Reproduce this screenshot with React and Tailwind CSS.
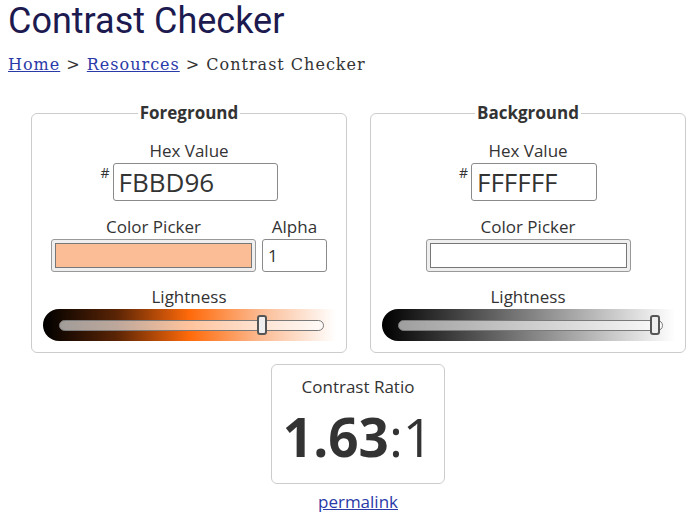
import React from 'react';

const sans = "font-['Open_Sans',sans-serif]";

function Slider({ gradient, thumb }) {
    return (
        <div className={`relative mx-auto h-8 w-[293px] rounded-l-full ${gradient} flex items-center pl-4 pr-3`}>
            <div className="h-[11px] w-full rounded-full border border-[#7a7a7a] bg-white/60" />
            <div
                className="absolute top-[6px] h-[20px] w-[10px] rounded-[3px] border-2 border-[#555] bg-[#eee]"
                style={{ left: thumb }}
            />
        </div>
    );
}

function Panel({ title, hex, swatch, alpha, gradient, thumb }) {
    return (
        <fieldset className="w-[316px] rounded-md border border-[#ccc] px-2 pb-[11px] pt-[14px] text-center">
            <legend className="mx-auto px-[2px] text-[17px] font-bold leading-6 text-[#333]">{title}</legend>
            <div className="text-[17px] leading-6 text-[#333]">Hex Value</div>
            <div className="flex justify-center">
                <span className="mr-[3px] mt-[2px] text-[14px] leading-4 text-[#333]">#</span>
                <input
                    readOnly
                    value={hex}
                    className={`h-[38px] ${alpha ? 'w-[165px]' : 'w-[126px]'} rounded-[3px] border border-[#8a8a8a] px-[5px] text-[26px] text-[#333] outline-none`}
                />
            </div>
            <div className="mt-[14px] flex justify-center gap-[6px]">
                <div className="flex flex-col items-center">
                    <div className="text-[17px] leading-6 text-[#333]">Color Picker</div>
                    <div className="h-[33px] w-[205px] rounded-[3px] border border-[#999] bg-[#efefef] p-[3px]">
                        <div className={`h-full w-full border border-[#777] ${swatch}`} />
                    </div>
                </div>
                {alpha && (
                    <div className="flex flex-col items-center">
                        <div className="text-[17px] leading-6 text-[#333]">Alpha</div>
                        <input
                            readOnly
                            value="1"
                            className="h-[33px] w-[65px] rounded-[3px] border border-[#8a8a8a] px-[5px] text-[17px] text-[#333] outline-none"
                        />
                    </div>
                )}
            </div>
            <div className="mt-[13px] text-[17px] leading-6 text-[#333]">Lightness</div>
            <Slider gradient={gradient} thumb={thumb} />
        </fieldset>
    );
}

export default function App() {
    return (
        <div className={`min-h-screen w-[698px] overflow-hidden bg-white ${sans}`}>
            <h1 className="ml-[8px] font-['Roboto',sans-serif] text-[36px] leading-[42px] text-[#1c1a4f]">Contrast Checker</h1>
            <nav className="ml-[8px] mt-[11px] font-['DejaVu_Serif',serif] text-[16px] leading-6 tracking-[1px] text-[#333]">
                <a href="#" className="text-[#2a3aa8] underline">Home</a>
                {' > '}
                <a href="#" className="text-[#2a3aa8] underline">Resources</a>
                {' > Contrast Checker'}
            </nav>

            <div className="ml-[31px] mt-[24px] flex gap-[23px]">
                <Panel
                    title="Foreground"
                    hex="FBBD96"
                    swatch="bg-[#fbbd96]"
                    alpha
                    gradient="bg-[linear-gradient(to_right,#000_0%,#5a2405_25%,#ff6a0a_50%,#fbbd96_75%,#ffffff_100%)]"
                    thumb="214px"
                />
                <Panel
                    title="Background"
                    hex="FFFFFF"
                    swatch="bg-white"
                    gradient="bg-[linear-gradient(to_right,#000_0%,#808080_50%,#ffffff_100%)]"
                    thumb="268px"
                />
            </div>

            <div className="mx-auto mt-[11px] flex w-[174px] translate-x-[9px] flex-col items-center rounded-md border border-[#ccc] pb-[10px] pt-[10px]">
                <div className="text-[17px] leading-6 text-[#333]">Contrast Ratio</div>
                <div className="mt-[2px] text-[53px] leading-[72px] text-[#333]">
                    <span className="font-bold">1.63</span>:1
                </div>
            </div>
            <div className="mt-[6px] translate-x-[9px] text-center">
                <a href="#" className="text-[17px] leading-6 text-[#2a3aa8] underline">permalink</a>
            </div>
        </div>
    );
}
